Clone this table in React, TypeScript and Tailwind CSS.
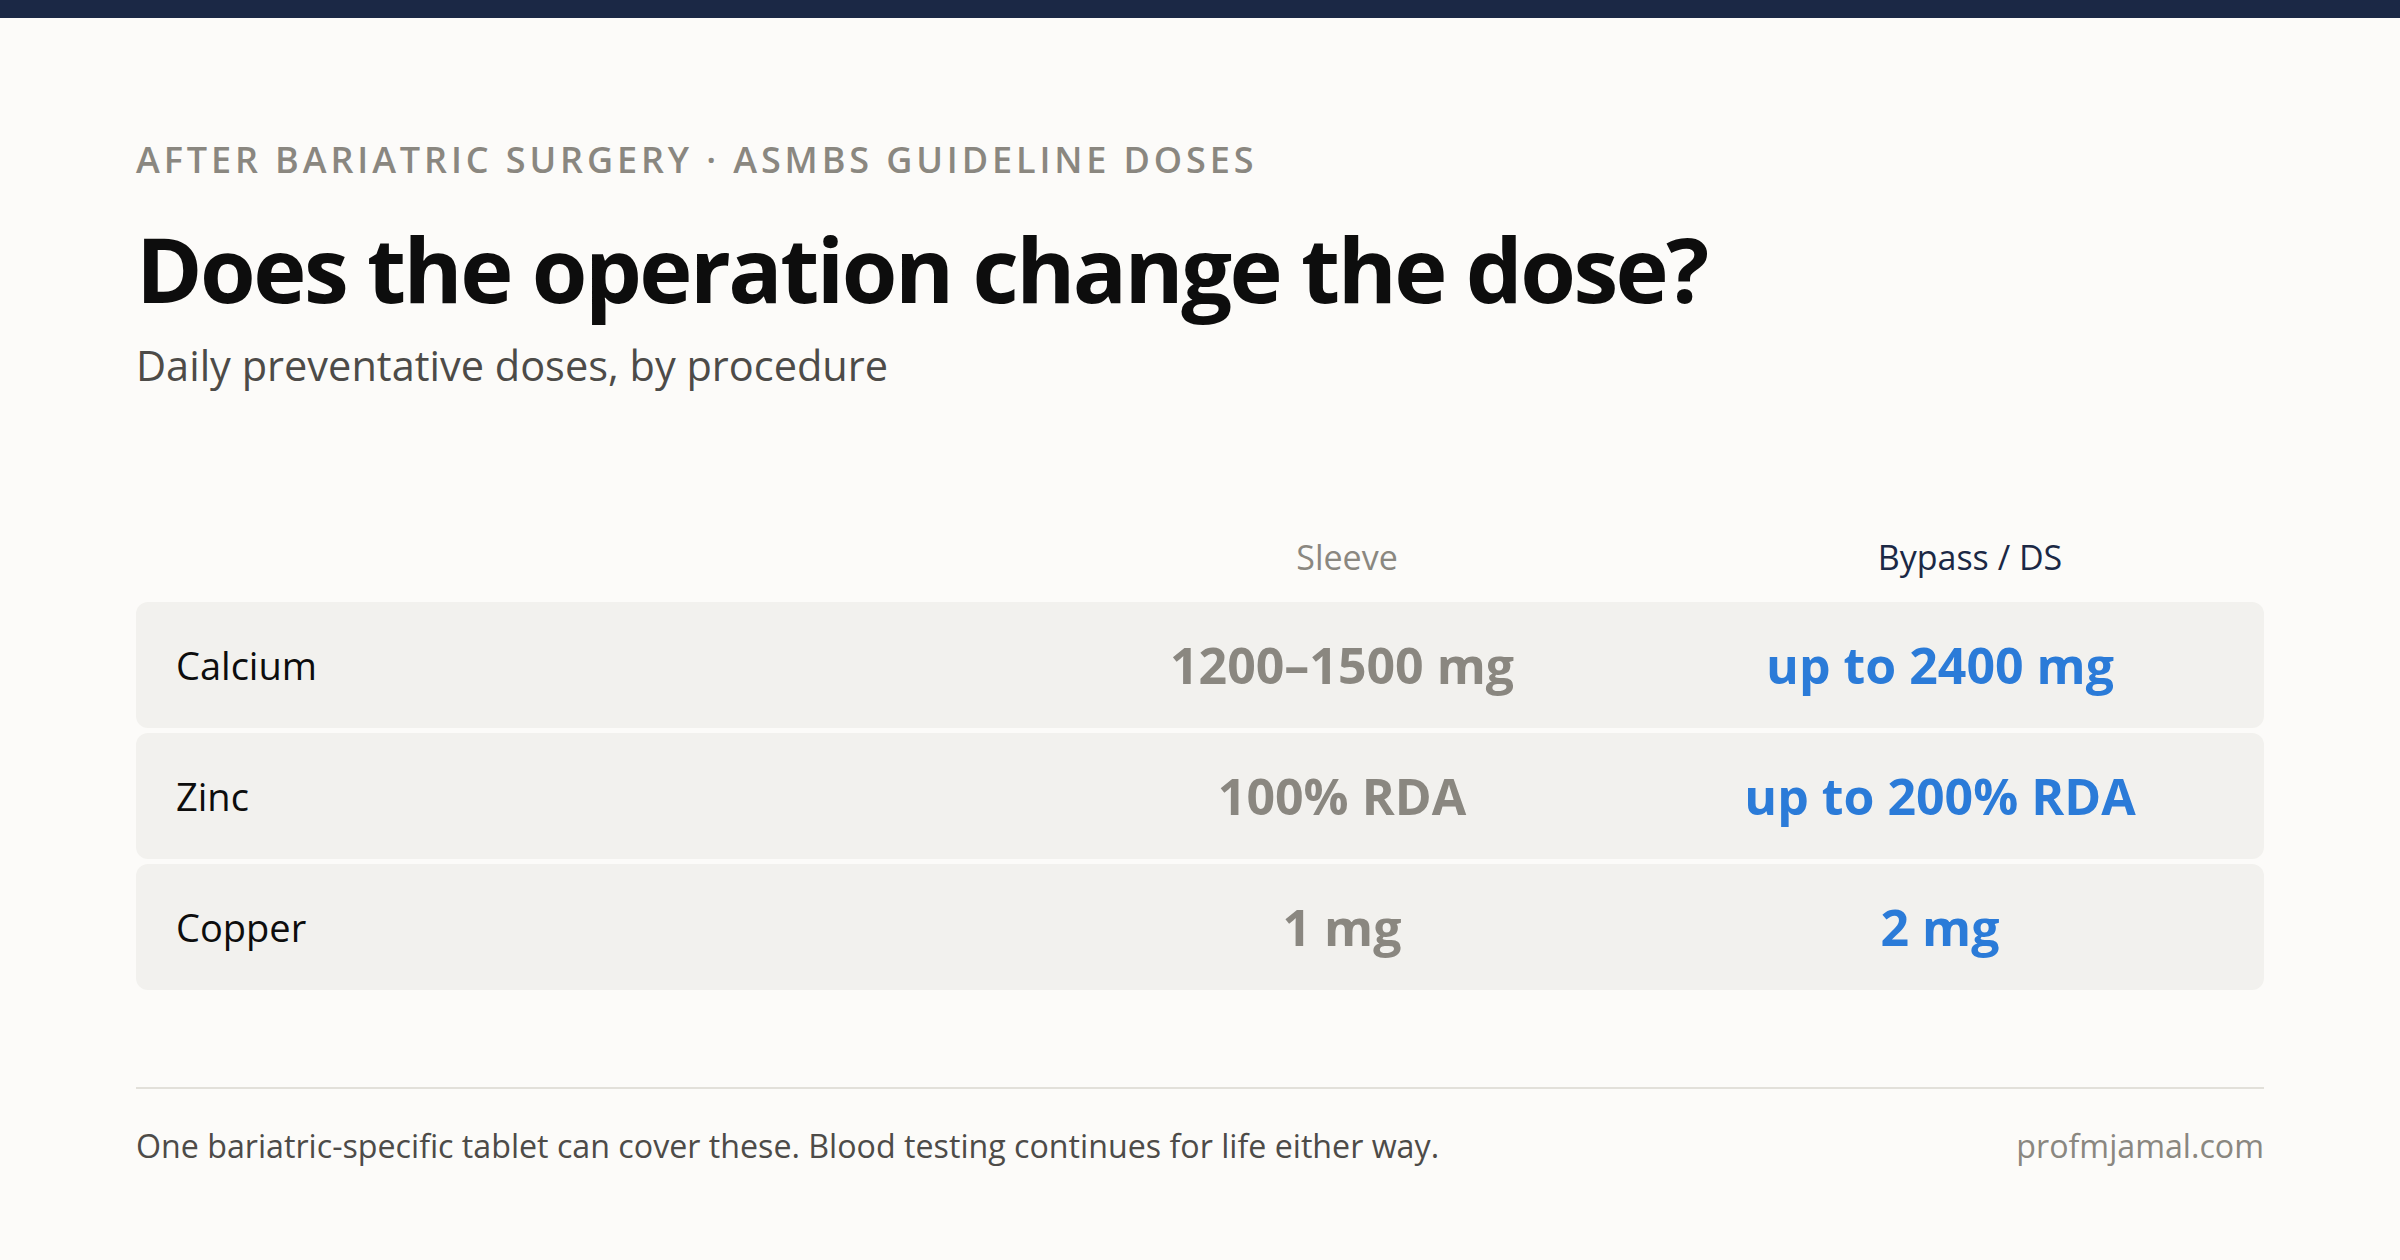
import React from "react";

const rows = [
  { name: "Calcium", sleeve: "1200–1500 mg", bypass: "up to 2400 mg" },
  { name: "Zinc", sleeve: "100% RDA", bypass: "up to 200% RDA" },
  { name: "Copper", sleeve: "1 mg", bypass: "2 mg" },
];

export default function App() {
  return (
    <div
      className="min-h-[1260px] w-full bg-[#fcfbf9] text-[#0d0d0d]"
      style={{ fontFamily: '"Open Sans", "Noto Sans", sans-serif' }}
    >
      <div className="h-[18px] w-full bg-[#1b2845]" />
      <div className="px-[136px]">
        <div className="pt-[124px] text-[36px] leading-none font-semibold tracking-[0.108em] text-[#8a8780]">
          AFTER BARIATRIC SURGERY · ASMBS GUIDELINE DOSES
        </div>
        <h1 className="mt-[45px] text-[90px] leading-none font-bold tracking-[-0.028em] text-[#0d0d0d]">
          Does the operation change the dose?
        </h1>
        <div className="mt-[32px] text-[41.5px] leading-none text-[#4d4b48]">
          Daily preventative doses, by procedure
        </div>

        <div className="mt-[153px] grid grid-cols-[1fr_658px_588px] text-[34px] leading-none">
          <div />
          <div className="text-center text-[#8a8780]">Sleeve</div>
          <div className="text-center font-medium text-[#1b2845]">Bypass / DS</div>
        </div>

        <div className="mt-[28px] flex flex-col gap-[5px]">
          {rows.map((r) => (
            <div
              key={r.name}
              className="grid h-[126px] grid-cols-[1fr_628px_568px] items-center rounded-[12px] bg-[#f2f1ee] px-[40px]"
            >
              <div className="text-[38px] leading-none text-[#0d0d0d]">{r.name}</div>
              <div className="text-center text-[50px] leading-none font-bold text-[#8a8780]">{r.sleeve}</div>
              <div className="text-center text-[50px] leading-none font-bold text-[#2b7bd8]">{r.bypass}</div>
            </div>
          ))}
        </div>

        <div className="mt-[97px] h-[2px] w-full bg-[#e2e0da]" />

        <div className="mt-[41px] flex items-baseline justify-between text-[32.2px] leading-none">
          <div className="text-[#4d4b48]">
            One bariatric-specific tablet can cover these. Blood testing continues for life either way.
          </div>
          <div className="text-[#8a8780]">profmjamal.com</div>
        </div>
      </div>
    </div>
  );
}
